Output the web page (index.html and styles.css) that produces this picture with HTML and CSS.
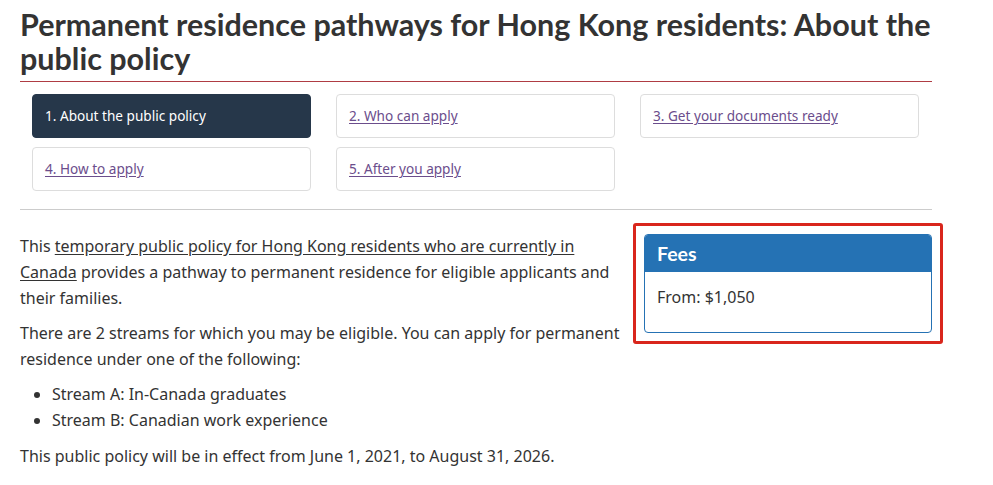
FILE: index.html
```html
<!DOCTYPE html>
<html lang="en">
<head>
<meta charset="utf-8">
<title>Permanent residence pathways for Hong Kong residents</title>
<link rel="stylesheet" href="styles.css">
</head>
<body>
<main class="page">
  <h1 class="title">Permanent residence pathways for Hong Kong residents: About the public policy</h1>
  <nav class="steps">
    <a class="step active">1. About the public policy</a>
    <a class="step" href="#">2. Who can apply</a>
    <a class="step" href="#">3. Get your documents ready</a>
    <a class="step" href="#">4. How to apply</a>
    <a class="step" href="#">5. After you apply</a>
  </nav>
  <hr class="rule">
  <div class="content">
    <div class="main">
      <p>This <a class="inline" href="#">temporary public policy for Hong Kong residents who are currently in Canada</a> provides a pathway to permanent residence for eligible applicants and their families.</p>
      <p>There are 2 streams for which you may be eligible. You can apply for permanent residence under one of the following:</p>
      <ul class="list">
        <li>Stream A: In-Canada graduates</li>
        <li>Stream B: Canadian work experience</li>
      </ul>
      <p>This public policy will be in effect from June 1, 2021, to August 31, 2026.</p>
    </div>
    <aside class="aside">
      <div class="highlight">
        <section class="panel">
          <h2 class="panel-head">Fees</h2>
          <div class="panel-body">From: $1,050</div>
        </section>
      </div>
    </aside>
  </div>
</main>
</body>
</html>
```
FILE: styles.css
```css
html, body {
  margin: 0;
  padding: 0;
  background: #fff;
}
body {
  font-family: "Noto Sans", "Open Sans", sans-serif;
  color: #333;
  font-size: 16px;
  line-height: 26px;
}
.page {
  padding: 7px 0 0 20px;
}
.title {
  width: 912px;
  font-family: Lato, sans-serif;
  font-weight: 700;
  font-size: 30.5px;
  line-height: 34px;
  color: #333;
  margin: 0;
  padding-bottom: 6px;
  border-bottom: 1px solid #af3c43;
}
.steps {
  display: grid;
  grid-template-columns: 279px 279px 279px;
  grid-auto-rows: 44px;
  column-gap: 25px;
  row-gap: 9px;
  margin: 12px 0 0 12px;
}
.step {
  display: flex;
  align-items: center;
  box-sizing: border-box;
  padding: 0 12px;
  border: 1px solid #ddd;
  border-radius: 4px;
  font-size: 13.6px;
  color: #6b4d8c;
  text-decoration: underline;
  text-underline-offset: 2px;
}
.step.active {
  background: #26374a;
  border-color: #26374a;
  color: #fff;
  text-decoration: none;
}
.rule {
  width: 912px;
  border: 0;
  border-top: 1px solid #ccc;
  margin: 18px 0 0;
}
.content {
  display: flex;
  align-items: flex-start;
  gap: 3px;
  padding-top: 13px;
}
.main {
  width: 610px;
}
.main p {
  margin: 10px 0 9px;
}
.main p + p {
  margin-top: 0;
}
.inline {
  color: #333;
  text-decoration: underline;
  text-underline-offset: 2px;
}
.list {
  margin: 0 0 10px;
  padding-left: 32px;
}
.aside {
  width: 310px;
  flex: none;
}
.highlight {
  border: 3px solid #d9261c;
  border-radius: 3px;
  padding: 8px;
}
.panel {
  border: 1px solid #2572b4;
  border-radius: 4px;
  overflow: hidden;
}
.panel-head {
  margin: 0;
  background: #2572b4;
  color: #fff;
  font-family: Lato, sans-serif;
  font-weight: 700;
  font-size: 19.5px;
  line-height: 37px;
  padding: 0 12px;
}
.panel-body {
  padding: 12px 12px 22px;
  font-size: 16px;
}
```
